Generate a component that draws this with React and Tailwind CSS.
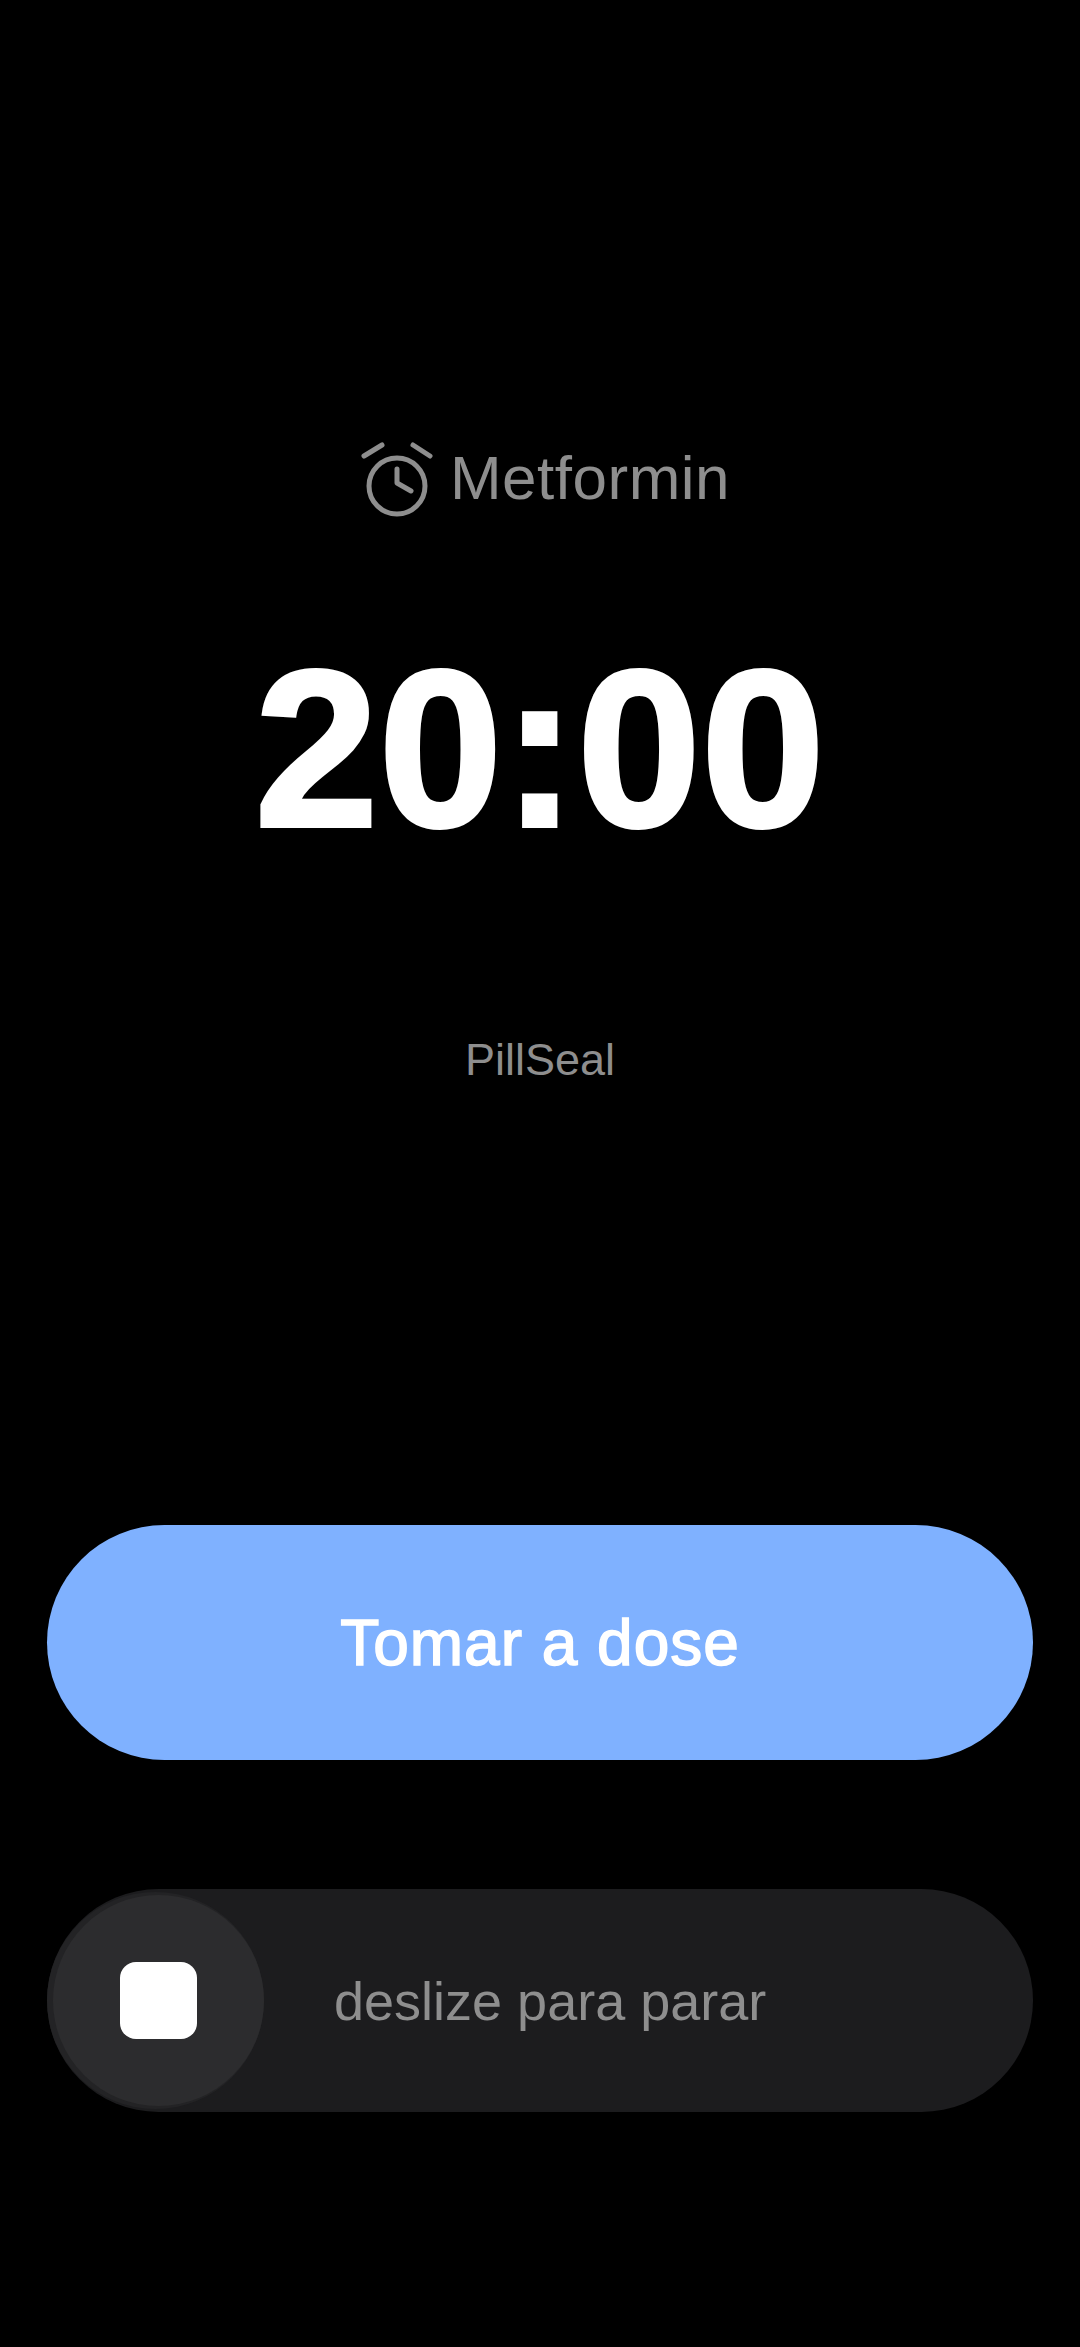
const SANS = "font-['Liberation_Sans',Arial,sans-serif]";

function AlarmIcon() {
  return (
    <svg width="76" height="84" viewBox="0 0 76 84" fill="none" stroke="#8e8e8e" strokeLinecap="round" strokeLinejoin="round" className="shrink-0">
      <circle cx="37" cy="50" r="28" strokeWidth="5" />
      <path d="M37 33V47L51 55" strokeWidth="5" />
      <path d="M4 20L22 9" strokeWidth="5" />
      <path d="M53 9L70 20" strokeWidth="5" />
    </svg>
  );
}

export default function App() {
  return (
    <div className={`${SANS} flex h-[2347px] w-[1080px] flex-col items-center bg-black`}>
      {/* Alarm label */}
      <div className="mt-[436px] flex h-[84px] items-center gap-[14px] pl-[10px]">
        <AlarmIcon />
        <span className="text-[62px] leading-[70px] tracking-[0.5px] text-[#8e8e8e]">Metformin</span>
      </div>

      {/* Time */}
      <div className="mt-[94px] text-[222px] font-bold leading-[270px] tracking-[0.5px] text-white [-webkit-text-stroke:4px_white]">20:00</div>

      <div className="mt-[150px] text-[45px] leading-[52px] text-[#8e8e8e]">PillSeal</div>

      {/* Take dose */}
      <button
        type="button"
        className="mt-[439px] flex h-[235px] w-[986px] items-center justify-center rounded-full bg-[#7fb1ff] text-[64px] leading-none tracking-[1px] text-white [-webkit-text-stroke:1.5px_white]"
      >
        Tomar a dose
      </button>

      {/* Slide to stop */}
      <div className="mt-[129px] flex h-[223px] w-[986px] items-center rounded-full bg-[#1c1c1e] pl-[6px]">
        <div className="flex h-[211px] w-[211px] shrink-0 items-center justify-center rounded-full bg-[#2c2c2e] shadow-[-3px_0_0_3px_#232325]">
          <div className="h-[77px] w-[77px] rounded-[16px] bg-white" />
        </div>
        <span className="ml-[70px] text-[54px] leading-none text-[#8e8e8e]">deslize para parar</span>
      </div>
    </div>
  );
}
